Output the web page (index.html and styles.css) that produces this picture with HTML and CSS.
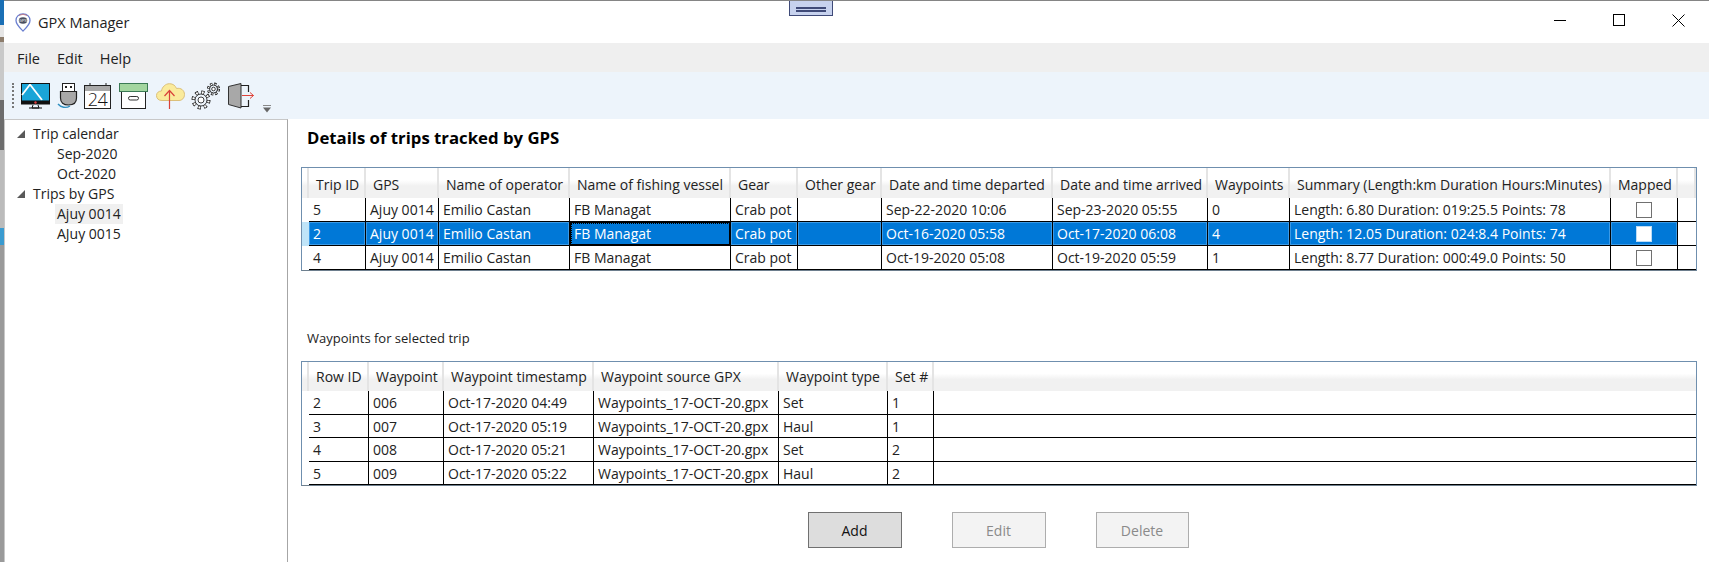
FILE: index.html
```html
<!DOCTYPE html>
<html lang="en">
<head>
<meta charset="utf-8">
<title>GPX Manager</title>
<link rel="stylesheet" href="styles.css">
</head>
<body>
<div class="desk"></div>
<div class="window">
  <div class="dock-tab"><span class="dock-line"></span><span class="dock-line"></span></div>
  <header class="titlebar">
    <svg class="logo" viewBox="0 0 16 19">
      <path d="M8 1 C3.5 1 1 4 1 7.5 C1 11.5 5 15 8 18 C11 15 15 11.5 15 7.5 C15 4 12.500 1 8 1Z" fill="#fff" stroke="#6a7fd0" stroke-width="1.300"/>
      <ellipse cx="8" cy="7.500" rx="4.200" ry="3.200" fill="#4a4f60"/>
      <path d="M4 2.500 Q8 0 12 2.500" fill="none" stroke="#d07a7a" stroke-width="0.800"/>
      <text x="8" y="9" font-size="4" fill="#fff" text-anchor="middle" font-family="Liberation Sans, sans-serif">GPX</text>
    </svg>
    <span class="app-name">GPX Manager</span>
    <div class="win-controls">
      <svg class="win-btn" viewBox="0 0 13 13"><path d="M0 6.500H12" stroke="#000" fill="none"/></svg>
      <svg class="win-btn" viewBox="0 0 13 13"><rect x="0.500" y="0.500" width="11" height="11" stroke="#000" fill="none"/></svg>
      <svg class="win-btn" viewBox="0 0 13 13"><path d="M0.500 0.500L12.500 12.500M12.500 0.500L0.500 12.500" stroke="#000" fill="none"/></svg>
    </div>
  </header>
  <nav class="menubar"><span>File</span><span>Edit</span><span>Help</span></nav>
  <div class="toolbar">
    <div class="gripper"></div>
    <svg class="ico w30" viewBox="0 0 30 26">
      <rect x="0.500" y="0.500" width="28" height="20" fill="#1aa5d8" stroke="#111"/>
      <path d="M9 1.500L21 17M9 1.500L1 12" stroke="#fff" stroke-width="1.800" fill="none"/>
      <rect x="0" y="17.500" width="29" height="4" fill="#111"/>
      <circle cx="14.500" cy="19.500" r="1.200" fill="#e04040"/>
      <path d="M12 22L11 25H18L17 22M8 25H21" stroke="#111" fill="none"/>
    </svg>
    <svg class="ico w19" viewBox="0 0 19 26">
      <rect x="4.500" y="0.500" width="12" height="8" fill="#fff" stroke="#222"/>
      <rect x="7" y="3" width="2" height="2" fill="#222"/><rect x="12" y="3" width="2" height="2" fill="#222"/>
      <path d="M2.500 8.500H18.500V15C18.500 19.500 15.500 22 10.500 22C5.500 22 2.500 19.500 2.500 15Z" fill="#a8a8a8" stroke="#222" stroke-width="1.200"/>
      <path d="M0 21C3 24.500 8 25.500 12 23" fill="none" stroke="#2f8fc0" stroke-width="1.400"/>
    </svg>
    <svg class="ico w28" viewBox="0 0 28 26">
      <rect x="0.500" y="2.500" width="26" height="23" fill="#fff" stroke="#222"/>
      <rect x="1" y="3" width="25" height="5" fill="#a9a9a9"/>
      <path d="M6 0V3M22 0V3" stroke="#222"/>
      <text x="13.500" y="23" class="cal-text">24</text>
    </svg>
    <svg class="ico w30" viewBox="0 0 30 26">
      <rect x="2.500" y="7.500" width="24" height="18" fill="#fff" stroke="#222"/>
      <rect x="0.500" y="0.500" width="28" height="8" fill="#a3d6a0" stroke="#3b7a55"/>
      <rect x="9.500" y="13.500" width="10" height="3.500" rx="1.700" fill="#fff" stroke="#333"/>
    </svg>
    <svg class="ico w29" viewBox="0 0 29 26">
      <path d="M6 17.500C2.500 17.500 0.500 15.500 0.500 12.500C0.500 9.500 3 8 5.500 8C6 4 9.500 0.700 13.500 0.700C17 0.700 19.500 2.700 20.500 5.500C25 4.500 28.500 7.500 28.500 11.500C28.500 15 26 17.500 23 17.500Z" fill="#faeb9c" stroke="#dcc07a"/>
      <path d="M13.500 26V8M8.500 13L13.500 7.500L18.500 13" fill="none" stroke="#d9423a" stroke-width="1.200"/>
    </svg>
    <svg class="ico w29" viewBox="0 0 29 26">
      <circle class="gear-t" cx="9" cy="17" r="7.500"/>
      <circle class="gear-h" cx="9" cy="17" r="7.500"/>
      <circle class="gear-b" cx="9" cy="17" r="6"/>
      <circle class="gear-c" cx="9" cy="17" r="3"/>
      <circle class="gear-t2" cx="21.500" cy="6" r="5"/>
      <circle class="gear-h2" cx="21.500" cy="6" r="5"/>
      <circle class="gear-b" cx="21.500" cy="6" r="4"/>
      <circle class="gear-c" cx="21.500" cy="6" r="1.800"/>
    </svg>
    <svg class="ico w27" viewBox="0 0 27 26">
      <path d="M0.500 3.500L13 0.500V25L0.500 21.500Z" fill="#a8a8a8" stroke="#333"/>
      <path d="M13 2.500H20.500V9M20.500 17V23.500H13" fill="none" stroke="#222" stroke-width="1.200"/>
      <path d="M14 12.500H25.500M22 9.500L25.500 12.500L22 15.500" fill="none" stroke="#e0433a"/>
    </svg>
    <svg class="overflow" viewBox="0 0 8 8">
      <path d="M0 0.500H8" stroke="#888" fill="none"/>
      <path d="M0 2.500H8L4 7.500Z" fill="#666"/>
    </svg>
  </div>
  <div class="body">
    <aside class="tree">
      <div class="tree-row"><i class="expander"></i><span>Trip calendar</span></div>
      <div class="tree-row child"><span>Sep-2020</span></div>
      <div class="tree-row child"><span>Oct-2020</span></div>
      <div class="tree-row"><i class="expander"></i><span>Trips by GPS</span></div>
      <div class="tree-row child"><span class="current">Ajuy 0014</span></div>
      <div class="tree-row child"><span>AJuy 0015</span></div>
    </aside>
    <main class="main">
      <h1 class="heading">Details of trips tracked by GPS</h1>
      <div class="grid grid-trips">
        <table>
          <colgroup>
            <col class="rh"><col class="t1"><col class="t2"><col class="t3"><col class="t4"><col class="t5"><col class="t6"><col class="t7"><col class="t8"><col class="t9"><col class="t10"><col class="t11"><col>
          </colgroup>
          <thead><tr>
            <th></th><th>Trip ID</th><th>GPS</th><th>Name of operator</th><th>Name of fishing vessel</th><th>Gear</th><th>Other gear</th><th>Date and time departed</th><th>Date and time arrived</th><th>Waypoints</th><th>Summary (Length:km Duration Hours:Minutes)</th><th>Mapped</th><th></th>
          </tr></thead>
          <tbody>
            <tr>
              <td class="head"></td><td>5</td><td>Ajuy 0014</td><td>Emilio Castan</td><td>FB Managat</td><td>Crab pot</td><td></td><td>Sep-22-2020 10:06</td><td>Sep-23-2020 05:55</td><td>0</td><td>Length: 6.80 Duration: 019:25.5 Points: 78</td><td class="check"><span class="box"></span></td><td class="fill"></td>
            </tr>
            <tr class="selected">
              <td class="head"></td><td>2</td><td>Ajuy 0014</td><td>Emilio Castan</td><td class="focus">FB Managat</td><td>Crab pot</td><td></td><td>Oct-16-2020 05:58</td><td>Oct-17-2020 06:08</td><td>4</td><td>Length: 12.05 Duration: 024:8.4 Points: 74</td><td class="check"><span class="box"></span></td><td class="fill"></td>
            </tr>
            <tr>
              <td class="head"></td><td>4</td><td>Ajuy 0014</td><td>Emilio Castan</td><td>FB Managat</td><td>Crab pot</td><td></td><td>Oct-19-2020 05:08</td><td>Oct-19-2020 05:59</td><td>1</td><td>Length: 8.77 Duration: 000:49.0 Points: 50</td><td class="check"><span class="box"></span></td><td class="fill"></td>
            </tr>
          </tbody>
        </table>
      </div>
      <p class="label">Waypoints for selected trip</p>
      <div class="grid grid-points">
        <table>
          <colgroup>
            <col class="rh"><col class="p1"><col class="p2"><col class="p3"><col class="p4"><col class="p5"><col class="p6"><col>
          </colgroup>
          <thead><tr>
            <th></th><th>Row ID</th><th>Waypoint</th><th>Waypoint timestamp</th><th>Waypoint source GPX</th><th>Waypoint type</th><th>Set #</th><th class="open"></th>
          </tr></thead>
          <tbody>
            <tr><td class="head"></td><td>2</td><td>006</td><td>Oct-17-2020 04:49</td><td>Waypoints_17-OCT-20.gpx</td><td>Set</td><td>1</td><td class="fill"></td></tr>
            <tr><td class="head"></td><td>3</td><td>007</td><td>Oct-17-2020 05:19</td><td>Waypoints_17-OCT-20.gpx</td><td>Haul</td><td>1</td><td class="fill"></td></tr>
            <tr><td class="head"></td><td>4</td><td>008</td><td>Oct-17-2020 05:21</td><td>Waypoints_17-OCT-20.gpx</td><td>Set</td><td>2</td><td class="fill"></td></tr>
            <tr><td class="head"></td><td>5</td><td>009</td><td>Oct-17-2020 05:22</td><td>Waypoints_17-OCT-20.gpx</td><td>Haul</td><td>2</td><td class="fill"></td></tr>
          </tbody>
        </table>
      </div>
      <div class="actions">
        <button class="btn btn-primary">Add</button>
        <button class="btn" disabled>Edit</button>
        <button class="btn btn-narrow" disabled>Delete</button>
      </div>
    </main>
  </div>
</div>
</body>
</html>
```
FILE: styles.css
```css
* { box-sizing: border-box; }
html, body { margin: 0; height: 100%; overflow: hidden; }
body {
  display: flex;
  font-family: "Open Sans", "Noto Sans", sans-serif;
  font-size: 14px;
  color: #111;
  background: #fff;
}
.desk {
  width: 4px;
  flex: none;
  background: linear-gradient(#1a6fb5 0 25px, #e6e6e6 25px 37px, #8d7d6c 37px 42px, #c9c9c9 42px 100px, #6d6d6d 100px 150px, #bbb 150px 228px, #3a9bd0 228px 245px, #9a9a9a 245px);
}
.window { flex: 1; min-width: 0; display: flex; flex-direction: column; position: relative; border-top: 1px solid #858585; }
.dock-tab {
  position: absolute;
  top: 0;
  left: 785px;
  width: 44px;
  height: 15px;
  background: #c7d2ee;
  border: 1px solid #3f4a78;
  border-top: none;
  display: flex;
  flex-direction: column;
  align-items: center;
  gap: 1px;
  padding-top: 6px;
}
.dock-line { width: 30px; height: 2px; background: #3f4a78; }

.titlebar { height: 42px; flex: none; display: flex; align-items: center; padding-left: 11px; background: #fff; }
.logo { width: 16px; height: 19px; flex: none; }
.app-name { margin-left: 7px; font-size: 14.500px; color: #222; }
.win-controls { margin-left: auto; margin-bottom: 3px; display: flex; align-items: center; gap: 46px; padding-right: 24px; }
.win-btn { width: 13px; height: 13px; display: block; }

.menubar { height: 29px; flex: none; display: flex; align-items: center; padding: 2px 0 0 13px; gap: 17px; background: #efefef; color: #222; font-size: 14.500px; }

.toolbar { height: 47px; flex: none; display: flex; align-items: flex-start; padding: 11px 0 0 8px; gap: 7px; background: #edf4fb; }
.gripper { width: 2px; height: 25px; border-left: 2px dotted #777; }
.ico { height: 26px; flex: none; display: block; overflow: visible; }
.w30 { width: 30px; }
.w29 { width: 29px; }
.w28 { width: 28px; }
.w27 { width: 27px; }
.w19 { width: 19px; }
.cal-text { font-family: "Open Sans", sans-serif; font-size: 18px; font-weight: 300; letter-spacing: -0.500px; text-anchor: middle; fill: #111; }
.gear-t, .gear-t2, .gear-h, .gear-h2 { fill: none; }
.gear-t { stroke: #111; stroke-width: 4; stroke-dasharray: 3 2.900; }
.gear-h { stroke: #fff; stroke-width: 2.400; stroke-dasharray: 1.800 4.100; stroke-dashoffset: -0.600; }
.gear-t2 { stroke: #111; stroke-width: 3; stroke-dasharray: 2.200 1.730; }
.gear-h2 { stroke: #fff; stroke-width: 1.400; stroke-dasharray: 1.200 2.730; stroke-dashoffset: -0.500; }
.gear-b { fill: #edf4fb; stroke: #111; stroke-width: 0.800; }
.gear-c { fill: #fff; stroke: #111; stroke-width: 0.800; }
.overflow { width: 8px; height: 8px; flex: none; margin: 22px 0 0 1px; display: block; }

.body { flex: 1; min-height: 0; display: flex; }
.tree {
  width: 284px;
  flex: none;
  padding: 4px 0 0 12px;
  border-top: 1px solid #c8c8c8;
  border-left: 1px solid #c8c8c8;
  border-right: 1px solid #a6a6a6;
}
.tree-row { height: 20px; display: flex; align-items: center; color: #222; line-height: 20px; }
.tree-row.child { padding-left: 38px; }
.tree-row.child span { padding: 0 2px; }
.tree-row .current { background: #f0f0f0; }
.expander {
  width: 0;
  height: 0;
  border-bottom: 8px solid #595959;
  border-left: 8px solid transparent;
  margin-right: 8px;
}

.main { flex: 1; min-width: 0; padding: 9px 12px 0 13px; }
.heading { margin: 0 0 19px 6px; font-size: 16.750px; line-height: 20px; font-weight: 700; color: #000; }
.label { margin: 57px 0 13px 6px; font-size: 13px; line-height: 20px; color: #222; }

.grid { border: 1px solid #6f8fae; border-bottom-color: #6e7f8e; background: #fff; }
table { width: 100%; table-layout: fixed; border-collapse: separate; border-spacing: 0; }
.rh { width: 7px; }
.t1 { width: 57px; } .t2 { width: 73px; } .t3 { width: 131px; } .t4 { width: 161px; }
.t5 { width: 67px; } .t6 { width: 84px; } .t7 { width: 171px; } .t8 { width: 155px; }
.t9 { width: 82px; } .t10 { width: 321px; } .t11 { width: 67px; }
.p1 { width: 60px; } .p2 { width: 75px; } .p3 { width: 150px; } .p4 { width: 185px; }
.p5 { width: 109px; } .p6 { width: 46px; }

th {
  height: 30px;
  padding: 3px 0 0 7px;
  text-align: left;
  font-weight: 400;
  white-space: nowrap;
  overflow: hidden;
  color: #222;
  background: linear-gradient(#fff 0 40%, #f1f1f1 60%, #f1f1f1);
  border-right: 2px solid #e4e4e4;
}
th.open { border-right: none; }
.grid-points th { height: 29px; padding-top: 0; }

td {
  height: 24px;
  padding: 0 0 0 4px;
  white-space: nowrap;
  overflow: hidden;
  color: #222;
  border-right: 1px solid #000;
  border-bottom: 1px solid #000;
}
.grid-points tbody tr:nth-child(even) td { height: 23px; }
td.head { padding: 0; border-right: none; border-bottom: none; background: #fff; }
td.fill { border-right: none; }
.check { padding: 0; text-align: center; }
.box { display: block; width: 16px; height: 16px; margin: 0 auto; background: #fff; border: 1px solid #707070; }

.selected td { background: #0078d7; color: #fff; box-shadow: inset 0 0 0 1px #3b9ae6; }
.selected td.head { background: #bfe4f8; box-shadow: none; }
.selected td.fill { background: #fff; box-shadow: none; }
.selected td.focus { box-shadow: inset 0 0 0 1px #000; outline: 1px dotted #000; outline-offset: -2px; }
.selected .box { border-color: #bcdcf5; }

.actions { margin-top: 26px; padding-right: 2px; display: flex; justify-content: center; gap: 50px; }
.btn {
  width: 94px;
  height: 36px;
  padding: 0;
  font: inherit;
  color: #8a8a8a;
  background: #f3f3f3;
  border: 1px solid #adadad;
}
.btn-narrow { width: 93px; }
.btn-primary { color: #111; background: #dddddd; border-color: #707070; }
```
